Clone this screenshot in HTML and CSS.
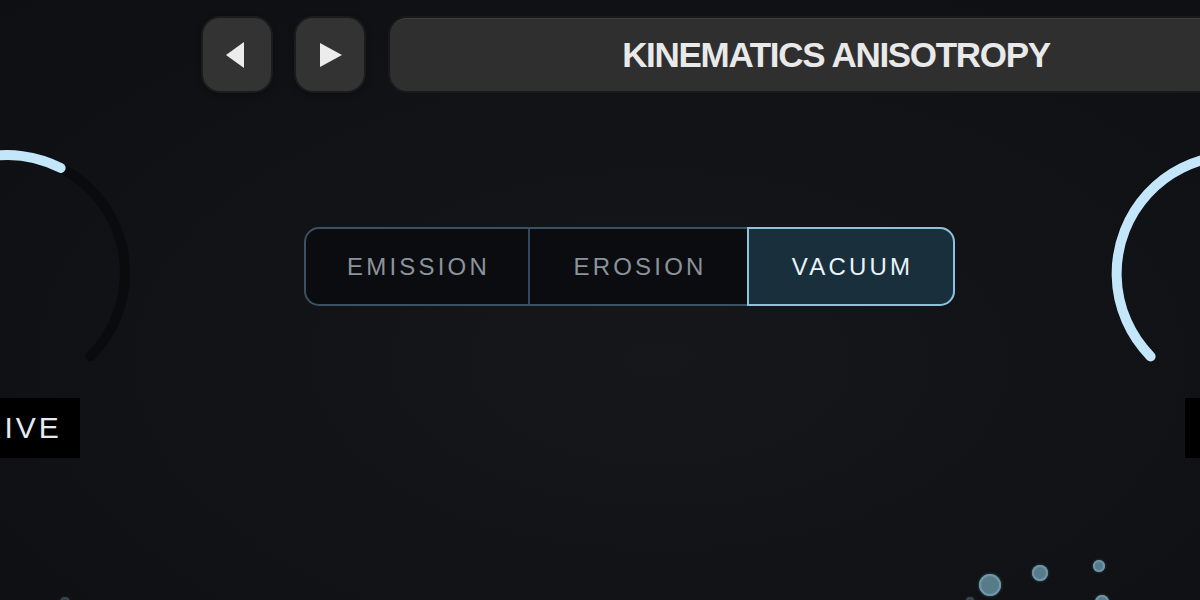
FILE: index.html
```html
<!DOCTYPE html>
<html lang="en">

<head>
    <meta charset="UTF-8" />
    <meta name="viewport" content="width=device-width, initial-scale=1.0" />
    <title>Kinematics</title>
    <link rel="stylesheet" href="styles.css">
</head>

<body>
    <div class="app">
        <header class="toolbar">
            <button class="nav-btn" aria-label="Previous preset">
                <svg width="20" height="26" viewBox="0 0 20 26">
                    <polygon points="19,0 19,26 1,13" />
                </svg>
            </button>
            <button class="nav-btn" aria-label="Next preset">
                <svg width="22" height="24" viewBox="0 0 22 24">
                    <polygon points="0,0 22,12 0,24" />
                </svg>
            </button>
            <div class="preset-name">KINEMATICS ANISOTROPY</div>
        </header>

        <main class="stage">
            <section class="knob knob-left">
                <svg class="knob-dial" width="250" height="250" viewBox="0 0 250 250">
                    <path class="knob-track" d="M 41.6 208.4 A 118 118 0 1 1 208.4 208.4" />
                    <path class="knob-value" d="M 41.6 208.4 A 118 118 0 0 1 178.6 19.9" />
                </svg>
                <div class="knob-label">DRIVE</div>
            </section>

            <div class="center-panel">
                <div class="mode-switch">
                    <span class="mode mode-emission">EMISSION</span>
                    <span class="mode mode-erosion">EROSION</span>
                    <span class="mode mode-vacuum active">VACUUM</span>
                </div>
            </div>

            <section class="knob knob-right">
                <svg class="knob-dial" width="250" height="250" viewBox="0 0 250 250">
                    <path class="knob-track" d="M 41.6 208.4 A 118 118 0 1 1 208.4 208.4" />
                    <path class="knob-value" d="M 41.6 208.4 A 118 118 0 0 1 200.8 34.6" />
                </svg>
                <div class="knob-label knob-label-short">MIX</div>
            </section>
        </main>

        <!-- floating dust in the lower corners -->
        <div class="particles">
            <span class="dot" style="left: 979px; top: 574px; width: 22px; height: 22px;"></span>
            <span class="dot" style="left: 1032px; top: 565px; width: 16px; height: 16px;"></span>
            <span class="dot" style="left: 1093px; top: 560px; width: 12px; height: 12px;"></span>
            <span class="dot" style="left: 1095px; top: 595px; width: 14px; height: 14px;"></span>
            <span class="dot dim" style="left: 966px; top: 597px; width: 8px; height: 8px;"></span>
            <span class="dot dim" style="left: 60px; top: 597px; width: 10px; height: 10px;"></span>
        </div>
    </div>
</body>

</html>
```

FILE: styles.css
```css
* {
    margin: 0;
    padding: 0;
    box-sizing: border-box;
}

body {
    font-family: 'Liberation Sans', Arial, sans-serif;
    background: #111216;
    overflow: hidden;
}

.app {
    position: relative;
    width: 1200px;
    height: 600px;
    overflow: hidden;
    background: radial-gradient(ellipse at 55% 60%, #16171b 0%, #121317 45%, #0e0f12 100%);
}

/* Preset bar */
.toolbar {
    display: flex;
    align-items: center;
    padding: 18px 0 0 203px;
    height: 91px;
}

.nav-btn {
    flex: 0 0 68px;
    display: flex;
    align-items: center;
    justify-content: center;
    height: 73px;
    margin-right: 25px;
    background: #333333;
    border: none;
    border-radius: 17px;
    box-shadow: 0 0 0 2px #1b1b1c, 0 2px 6px rgba(0, 0, 0, 0.5);
}

.nav-btn svg {
    fill: #ececec;
}

.nav-btn:first-child svg {
    margin-left: -4px;
}

.nav-btn:nth-child(2) svg {
    margin-left: 2px;
}

.preset-name {
    flex: 0 0 892px;
    height: 73px;
    margin-left: 1px;
    display: flex;
    align-items: center;
    justify-content: center;
    background: #2f2f2f;
    border-radius: 17px;
    border-top: 1px solid #3c3c3c;
    box-shadow: 0 0 0 2px #19191a;
    color: #e9e9e9;
    font-size: 35px;
    font-weight: 700;
    letter-spacing: -1.3px;
}

/* Knobs and centre */
.stage {
    display: flex;
    margin-top: 57px;
}

.knob {
    flex: 0 0 250px;
    display: flex;
    flex-direction: column;
    align-items: center;
}

.knob-left {
    margin-left: -118px;
}

.knob-right {
    margin-right: -159px;
}

.knob-dial {
    display: block;
}

.knob-track {
    fill: none;
    stroke: #0a0b0d;
    stroke-width: 10;
    stroke-linecap: round;
}

.knob-value {
    fill: none;
    stroke: #c4e6fb;
    stroke-width: 10;
    stroke-linecap: round;
}

.knob-label {
    height: 60px;
    line-height: 60px;
    padding: 0 18px 0 21px;
    background: #000000;
    color: #e2edf3;
    font-size: 30px;
    letter-spacing: 3px;
}

.knob-label-short {
    padding: 0 16px 0 19px;
}

.center-panel {
    flex: 1;
    padding: 79px 0 0 172px;
}

.mode-switch {
    display: flex;
    width: 651px;
    height: 79px;
    background: #0b0c0f;
    border: 2px solid #3b5060;
    border-radius: 15px;
}

.mode {
    display: flex;
    align-items: center;
    justify-content: center;
    padding-left: 3px;
    color: #8b939b;
    font-size: 24px;
    letter-spacing: 3.2px;
}

.mode-emission {
    width: 224px;
    border-right: 2px solid #33485a;
}

.mode-erosion {
    width: 217px;
}

.mode-vacuum {
    flex: 1;
}

.mode.active {
    margin: -2px -2px -2px 0;
    background: #1a2f3c;
    border: 2px solid #8ec2dc;
    border-radius: 0 15px 15px 0;
    color: #e8f4fa;
}

/* Particles */
.particles {
    position: absolute;
    inset: 0;
    pointer-events: none;
}

.dot {
    position: absolute;
    border-radius: 50%;
    background: #587b8a;
    box-shadow: inset 0 0 0 2px #6f97a8, 0 0 3px rgba(110, 150, 168, 0.5);
    filter: blur(0.6px);
}

.dot.dim {
    opacity: 0.4;
}
```
